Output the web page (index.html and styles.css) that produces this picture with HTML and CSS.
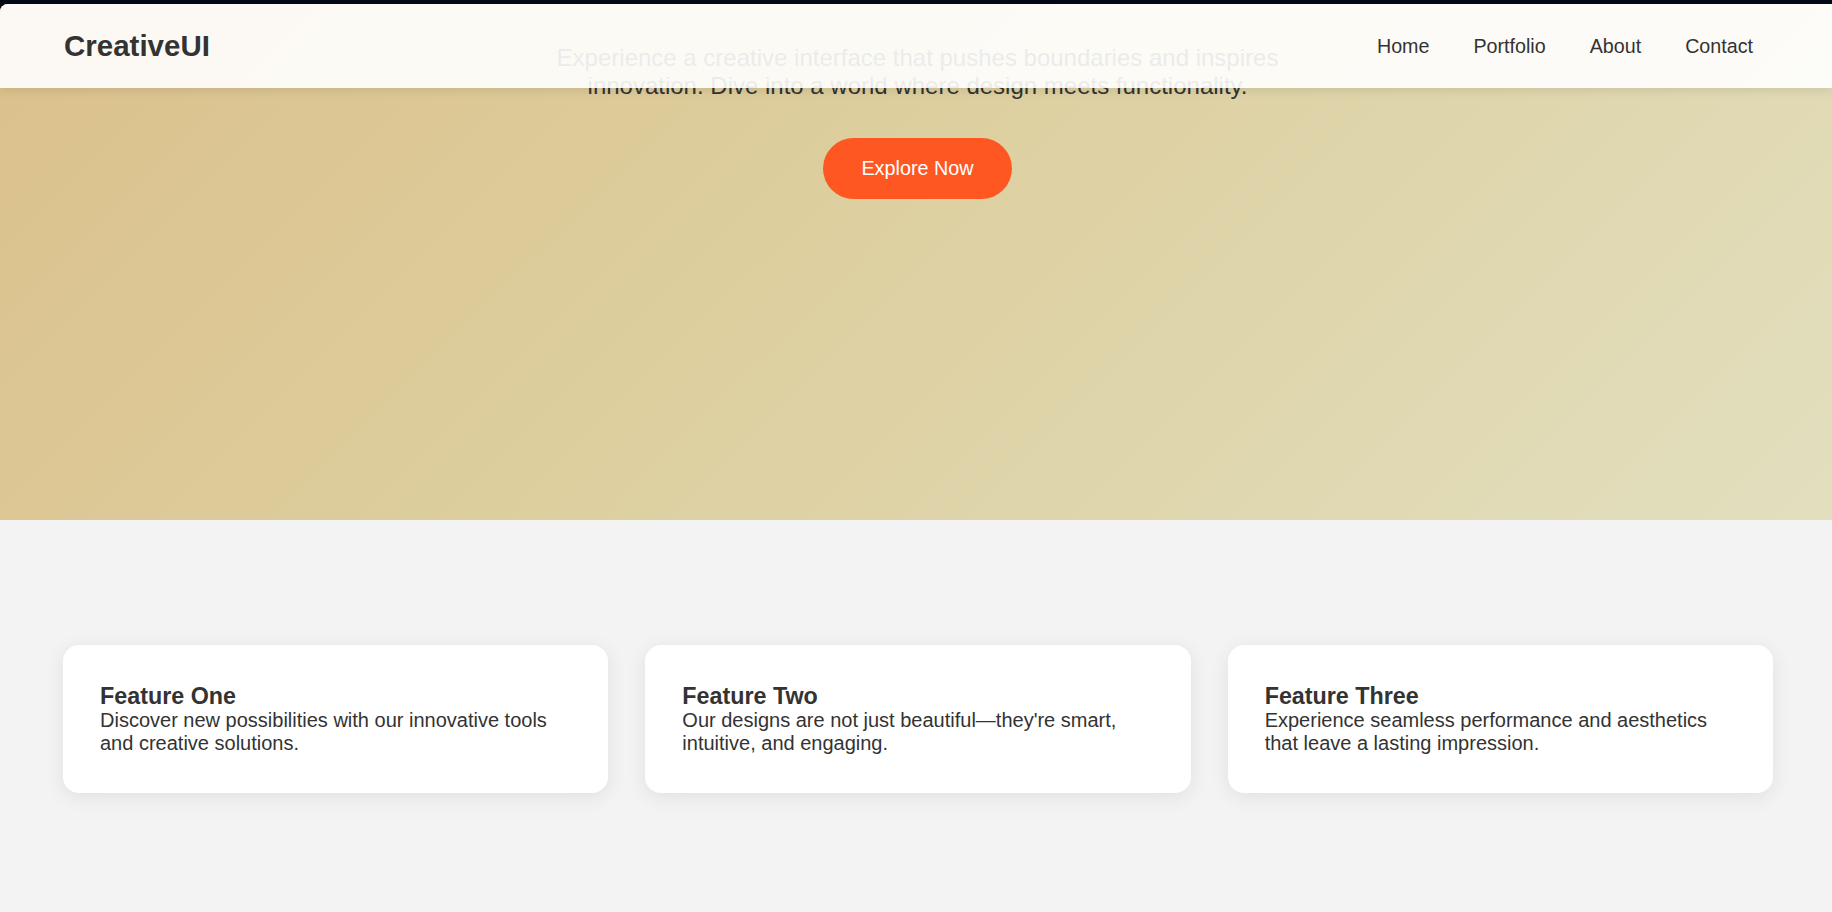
FILE: index.html
```html
<!DOCTYPE html>
<html lang="en">
<head>
<meta charset="utf-8">
<title>CreativeUI</title>
<link rel="stylesheet" href="styles.css">
</head>
<body>
<div class="page">
  <header class="site-header">
    <div class="logo">CreativeUI</div>
    <nav class="nav">
      <a href="#">Home</a>
      <a href="#">Portfolio</a>
      <a href="#">About</a>
      <a href="#">Contact</a>
    </nav>
  </header>
  <section class="hero">
    <p class="hero-text">Experience a creative interface that pushes boundaries and inspires innovation. Dive into a world where design meets functionality.</p>
    <a class="btn" href="#">Explore Now</a>
  </section>
  <section class="features">
    <div class="card">
      <h3>Feature One</h3>
      <p>Discover new possibilities with our innovative tools and creative solutions.</p>
    </div>
    <div class="card">
      <h3>Feature Two</h3>
      <p>Our designs are not just beautiful—they're smart, intuitive, and engaging.</p>
    </div>
    <div class="card">
      <h3>Feature Three</h3>
      <p>Experience seamless performance and aesthetics that leave a lasting impression.</p>
    </div>
  </section>
</div>
</body>
</html>
```

FILE: styles.css
```css
* { box-sizing: border-box; }
html, body { margin: 0; padding: 0; }
body {
  background: #030816;
  font-family: "Liberation Sans", Arial, sans-serif;
  color: #333;
  overflow: hidden;
}
.page {
  position: relative;
  margin-top: 4px;
  height: 908px;
  background: #f3f3f3;
  border-top-left-radius: 8px;
  overflow: hidden;
}
.site-header {
  position: absolute;
  top: 0;
  left: 0;
  right: 0;
  height: 84px;
  display: flex;
  align-items: center;
  justify-content: space-between;
  padding: 0 79px 0 64px;
  background: rgba(255, 255, 255, 0.9);
  box-shadow: 0 2px 10px rgba(0, 0, 0, 0.1);
  z-index: 10;
}
.logo {
  font-size: 29.5px;
  font-weight: 700;
  color: #333;
}
.nav {
  display: flex;
  gap: 44px;
}
.nav a {
  font-size: 19.7px;
  color: #333;
  text-decoration: none;
}
.hero {
  height: 516px;
  padding: 40px 0 0 3px;
  text-align: center;
  background: linear-gradient(135deg, #dbc08b 0%, #ddcf9f 45%, #e2dfbf 100%);
}
.hero-text {
  max-width: 800px;
  margin: 0 auto 38px;
  font-size: 24px;
  line-height: 28px;
  color: #333;
}
.btn {
  display: inline-block;
  padding: 19px 38px;
  font-size: 19.8px;
  line-height: 23px;
  color: #fff;
  background: #ff5722;
  border-radius: 31px;
  text-decoration: none;
}
.features {
  display: grid;
  grid-template-columns: repeat(3, 1fr);
  gap: 37px;
  padding: 125px 59px 0 63px;
}
.card {
  background: #fff;
  border-radius: 16px;
  padding: 38px 37px;
  box-shadow: 0 4px 20px rgba(0, 0, 0, 0.08);
}
.card h3 {
  margin: 0;
  font-size: 23.3px;
  line-height: 26px;
  font-weight: 700;
  color: #333;
}
.card p {
  margin: 0;
  font-size: 20px;
  line-height: 23px;
  color: #333;
}
```
